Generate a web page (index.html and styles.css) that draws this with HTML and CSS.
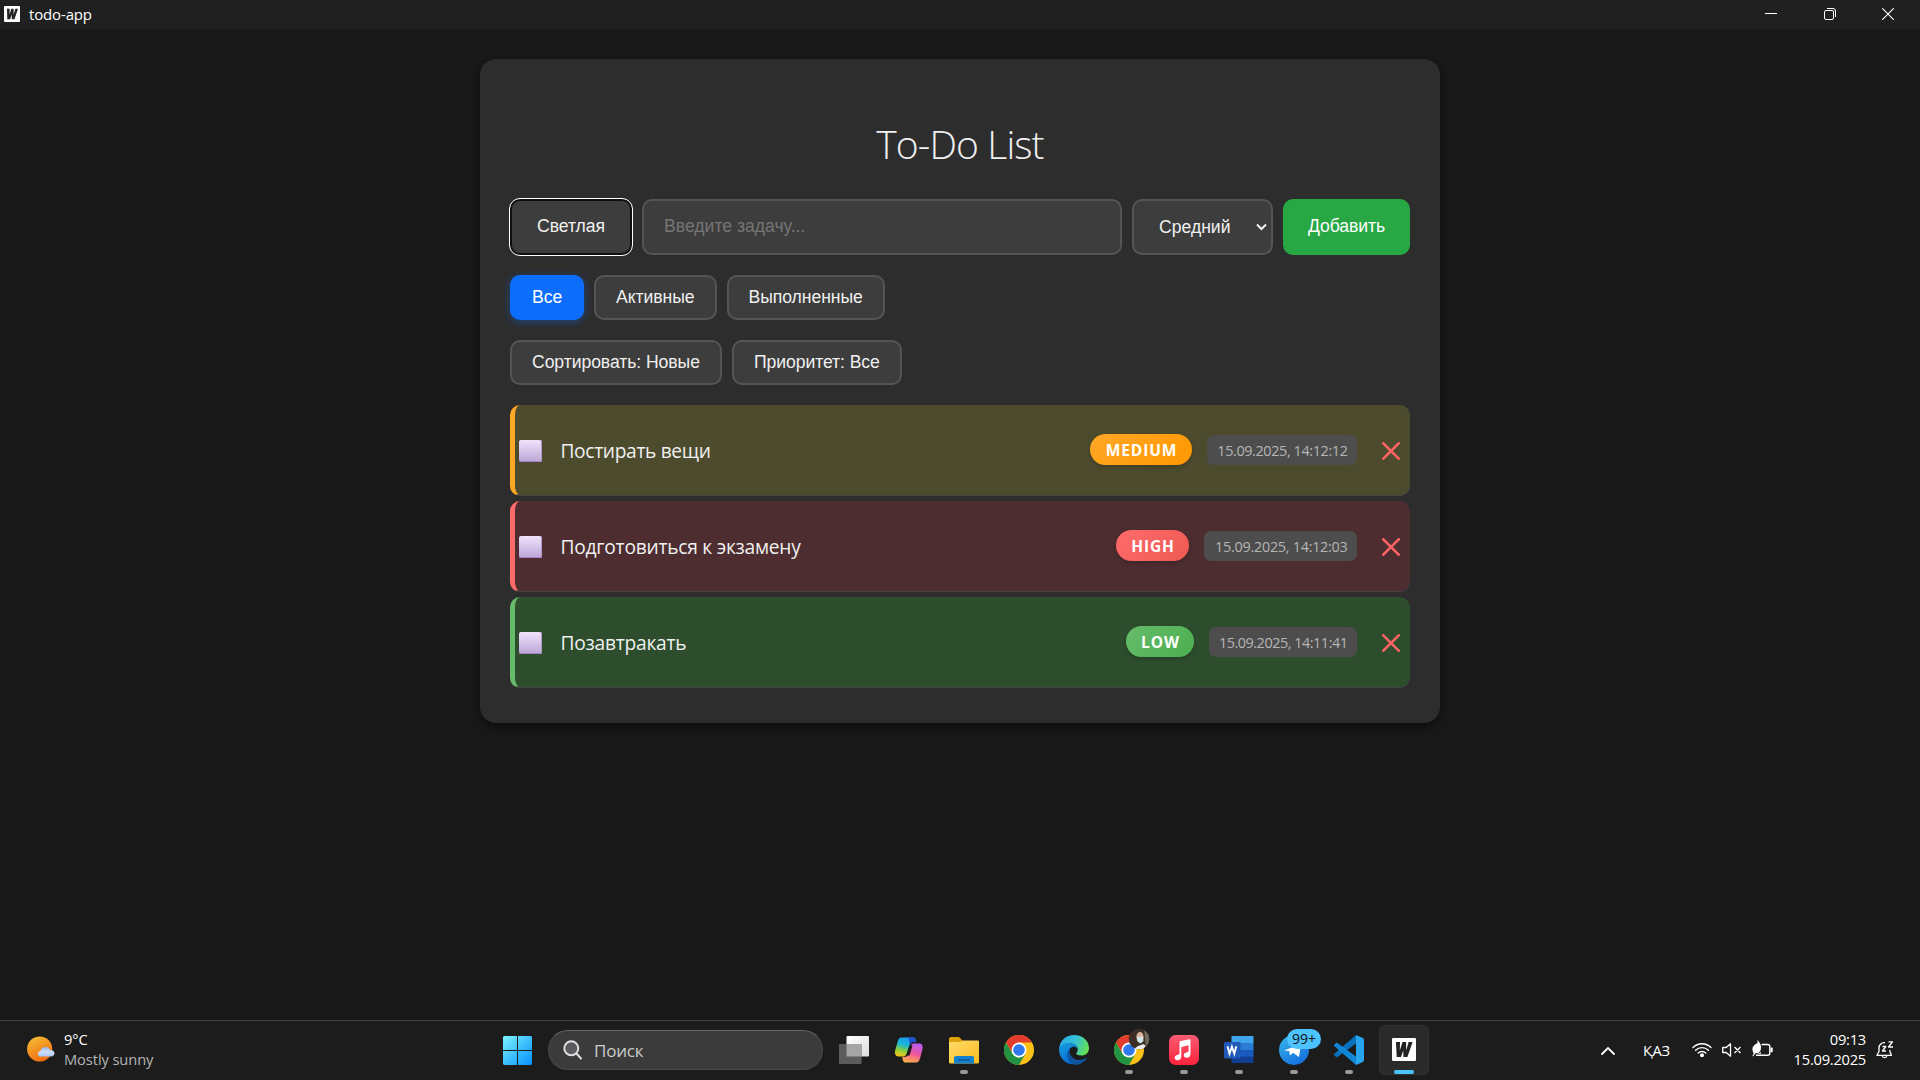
FILE: index.html
```html
<!DOCTYPE html>
<html lang="ru">
<head>
<meta charset="utf-8">
<title>todo-app</title>
<link rel="stylesheet" href="styles.css">
</head>
<body>
<div class="window">
  <header class="titlebar">
    <svg class="app-icon" width="16" height="16" viewBox="0 0 24 24"><rect width="24" height="24" rx="1.5" fill="#fff"/><path d="M4.500 4h4l-.2 9L11 4h3.400l.1 9L17 4h4l-5.300 16h-4l-.2-7.500L9.200 20H5z" fill="#222"/></svg>
    <span class="titlebar-text">todo-app</span>
    <div class="window-buttons">
      <svg width="12" height="12" viewBox="0 0 12 12"><path d="M0 5.500h12" stroke="#fff"/></svg>
      <svg width="12" height="12" viewBox="0 0 12 12" fill="none" stroke="#fff"><rect x=".5" y="2.500" width="9" height="9" rx="1.500"/><path d="M3 .5h6a2.500 2.500 0 0 1 2.500 2.500v6"/></svg>
      <svg width="12" height="12" viewBox="0 0 12 12"><path d="M.3.3l11.400 11.400M11.700.3L.3 11.700" stroke="#fff" stroke-width="1.100"/></svg>
    </div>
  </header>

  <main class="page">
    <section class="card">
      <h1 class="heading">To-Do List</h1>
      <div class="task-form">
        <button class="btn btn-theme">Светлая</button>
        <input class="task-input" type="text" placeholder="Введите задачу...">
        <div class="select"><span>Средний</span><svg width="11" height="8" viewBox="0 0 11 8"><path d="M1 1.500l4.500 4.500L10 1.500" fill="none" stroke="#f0f0f0" stroke-width="2"/></svg></div>
        <button class="btn btn-add">Добавить</button>
      </div>
      <div class="filters">
        <button class="btn active">Все</button>
        <button class="btn">Активные</button>
        <button class="btn">Выполненные</button>
      </div>
      <div class="filters">
        <button class="btn">Сортировать: Новые</button>
        <button class="btn">Приоритет: Все</button>
      </div>
      <ul class="tasks">
        <li class="task medium"><span class="check"></span><span class="task-text">Постирать вещи</span><span class="badge">MEDIUM</span><span class="date">15.09.2025, 14:12:12</span><svg class="remove" width="18" height="18" viewBox="0 0 18 18"><path d="M1.300 1.300l15.400 15.400M16.700 1.300L1.300 16.700"/></svg></li>
        <li class="task high"><span class="check"></span><span class="task-text">Подготовиться к экзамену</span><span class="badge">HIGH</span><span class="date">15.09.2025, 14:12:03</span><svg class="remove" width="18" height="18" viewBox="0 0 18 18"><path d="M1.300 1.300l15.400 15.400M16.700 1.300L1.300 16.700"/></svg></li>
        <li class="task low"><span class="check"></span><span class="task-text">Позавтракать</span><span class="badge">LOW</span><span class="date">15.09.2025, 14:11:41</span><svg class="remove" width="18" height="18" viewBox="0 0 18 18"><path d="M1.300 1.300l15.400 15.400M16.700 1.300L1.300 16.700"/></svg></li>
      </ul>
    </section>
  </main>

  <footer class="taskbar">
    <div class="weather">
      <svg width="28" height="26" viewBox="0 0 28 26"><defs><linearGradient id="sun" x1=".2" y1="0" x2=".7" y2="1"><stop offset="0" stop-color="#f3bc33"/><stop offset="1" stop-color="#f2660d"/></linearGradient><linearGradient id="cloud" x1="0" y1="0" x2="0" y2="1"><stop offset="0" stop-color="#8fb4ee"/><stop offset=".5" stop-color="#cfe0fa"/><stop offset="1" stop-color="#a8c6f5"/></linearGradient></defs><circle cx="12.700" cy="13" r="12.600" fill="url(#sun)"/><path d="M13 20.500a2.800 2.800 0 0 1 .3-5.500 5.500 5.500 0 0 1 10-1.300c2.500.2 4.200 1.800 4.200 3.600 0 2-1.500 3.200-3.500 3.200z" fill="url(#cloud)"/></svg>
      <div class="weather-text"><span>9°C</span><span class="dim">Mostly sunny</span></div>
    </div>
    <div class="dock">
      <svg class="start" width="29" height="29" viewBox="0 0 29 29"><defs><linearGradient id="win" gradientUnits="userSpaceOnUse" x1="0" y1="0" x2="29" y2="29"><stop offset="0" stop-color="#7df4ff"/><stop offset=".5" stop-color="#3fc0fb"/><stop offset="1" stop-color="#0592ff"/></linearGradient></defs><path d="M1 0h13v14H0V1zM15 0h13l1 1v13H15zM0 15h14v14H1l-1-1zM15 15h14v13l-1 1H15z" fill="url(#win)"/></svg>
      <div class="search"><svg width="20" height="20" viewBox="0 0 20 20" fill="none" stroke="#dcdfe3" stroke-width="2"><circle cx="8.300" cy="8.300" r="7" fill="#5b5b5d"/><path d="M13.500 13.500l4.500 5" stroke-linecap="round"/></svg><span>Поиск</span></div>
      <div class="apps">
        <span class="app"><svg width="30" height="30" viewBox="0 0 30 30"><defs><linearGradient id="tv" x1="0" y1="0" x2="1" y2="1"><stop offset="0" stop-color="#fff"/><stop offset="1" stop-color="#ddd"/></linearGradient></defs><rect x="7.500" y="1" width="22.500" height="20.500" rx="1" fill="url(#tv)"/><rect y="9" width="22.500" height="20" rx="1" fill="#5c5c5c"/><path d="M7.500 9h15v12.500h-15z" fill="#a5a5a5"/></svg></span>
        <span class="app"><svg width="30" height="30" viewBox="0 0 30 30"><defs><linearGradient id="cp1" x1=".6" y1="0" x2=".3" y2="1"><stop offset="0" stop-color="#1a9bef"/><stop offset=".4" stop-color="#18b7d4"/><stop offset=".7" stop-color="#8bd03e"/><stop offset="1" stop-color="#f5c618"/></linearGradient><linearGradient id="cp2" x1=".6" y1="0" x2=".3" y2="1"><stop offset="0" stop-color="#b95cf0"/><stop offset=".5" stop-color="#f0569b"/><stop offset="1" stop-color="#fcb04a"/></linearGradient></defs><path d="M7.500 2.500H19c2 0 2.700 1.500 3.200 4.200h-3c-2 0-2.900 1-3.500 3l-3 8.500c-.7 2.500-1.700 3.300-4 3.300H4.500C1.500 21.500.3 18.500 1.300 15l2.400-8.500c.7-2.500 1.700-4 3.800-4z" fill="url(#cp1)"/><path d="M14.500 2.500H19c2 0 2.700 1.500 3.200 4.700h-3c-2 0-2.600.8-3.200 2.800z" fill="#1f50d0"/><path d="M22 27.500H11.500c-2 0-2.700-1.500-3.300-5.500h2.500c2 0 3-1.500 3.600-3.500l2.400-7.500c.7-2 2-2.500 4.200-2.500h4.600c3 0 3.700 3 2.900 6L26 23.500c-.8 2.500-2 4-4 4z" fill="url(#cp2)"/><path d="M15.500 10.500h3l-3 10h-3z" fill="#1c1c1c"/></svg></span>
        <span class="app run"><svg width="30" height="30" viewBox="0 0 30 30"><defs><linearGradient id="fo" x1="0" y1="0" x2="1" y2="1"><stop offset="0" stop-color="#ffdb68"/><stop offset="1" stop-color="#fdbd22"/></linearGradient></defs><path d="M0 4a2 2 0 0 1 2-2h8l4 4h14v4H0z" fill="#dca10b"/><path d="M0 7h11l3-1.500h15a1 1 0 0 1 1 1V27a1.500 1.500 0 0 1-1.500 1.500h-27A1.500 1.500 0 0 1 0 27z" fill="url(#fo)"/><path d="M5 28.500V23a2 2 0 0 1 2-2h16a2 2 0 0 1 2 2v5.500z" fill="#1481cf"/><path d="M9 25h12" stroke="#0b5393" stroke-width="1.300"/></svg></span>
        <span class="app"><svg width="30" height="30" viewBox="0 0 30 30"><g id="chrome"><circle cx="15" cy="15" r="15" fill="#fbc116"/><path d="M2 7.500A15 15 0 0 1 28 7.500H15L8.500 18.700z" fill="#e33b2e"/><path d="M2 7.500A15 15 0 0 0 15 30l6.500-11.300L8.500 18.700z" fill="#229342"/><circle cx="15" cy="15" r="7.500" fill="#fff"/><circle cx="15" cy="15" r="5.800" fill="#3079ee"/></g></svg></span>
        <span class="app"><svg width="30" height="30" viewBox="0 0 30 30"><defs><linearGradient id="e1" x1="0" y1=".3" x2="1" y2=".6"><stop offset="0" stop-color="#2aa8e4"/><stop offset=".5" stop-color="#35c1d6"/><stop offset="1" stop-color="#66e34c"/></linearGradient><linearGradient id="e2" x1="0" y1="0" x2=".5" y2="1"><stop offset="0" stop-color="#199fe0"/><stop offset="1" stop-color="#0669d3"/></linearGradient></defs><path d="M0 14C1 5 7 0 15 0c9 0 15 6 15 13 0 5-3.500 7.500-7.500 7.500-3 0-5.300-1-5.300-2 0-.8 1.600-1.500 1.600-4C18.800 10 13 7.500 8 8.500 4 9.300 1.500 11 0 14z" fill="url(#e1)"/><path d="M0 14c2-5 6-6 9.500-6 5 0 9.300 3 9.300 6.500-.5-1.800-2-2.800-4-2.800-4 0-6 4-4 8.800 1.500 4 5.500 7 9.500 7.500C10 32.500 0 25 0 14z" fill="url(#e2)"/><path d="M11 14c-1.500 6 3 11 9 11 4 0 6.500-2 8-2C26.500 26 21 30 16 29.800 8 28 5.500 17 11 14z" fill="#10559f"/></svg></span>
        <span class="app run"><svg width="38" height="38" viewBox="0 0 38 38" class="profile"><use href="#chrome" x="0" y="8"/><clipPath id="av"><circle cx="25" cy="12" r="10.300"/></clipPath><g clip-path="url(#av)"><path d="M14 0h24v24H14z" fill="#3d2f25"/><path d="M30 0h8v22h-6z" fill="#6f6b5c"/><ellipse cx="26" cy="10" rx="3.600" ry="5" fill="#d9b29c"/><path d="M23 10l6-.500.5 4.500-3 2.500-3-2z" fill="#cfe5ec"/><path d="M19 23l5-4 6-2 3 5z" fill="#ececf0"/></g></svg></span>
        <span class="app run"><svg width="30" height="30" viewBox="0 0 30 30"><defs><linearGradient id="mu" x1="0" y1="0" x2="0" y2="1"><stop offset="0" stop-color="#fb5c74"/><stop offset="1" stop-color="#fa233b"/></linearGradient></defs><rect width="30" height="30" rx="6.500" fill="url(#mu)"/><path d="M21.500 5.300v13.500c0 2.500-1.500 4-3.800 4-1.800 0-2.900-1-2.900-2.500 0-1.700 1.200-2.600 3.200-3 1.200-.2 1.600-.5 1.600-1.500V10.300L12.300 12v9.300c0 2.500-1.400 4-3.800 4-1.700 0-2.800-1-2.800-2.500 0-1.700 1.200-2.500 3.200-3 1.200-.2 1.600-.5 1.600-1.500V7.500c0-.8.300-1.200 1.100-1.400l8.800-1.900c.8-.1 1.100.3 1.100 1.100z" fill="#fff"/></svg></span>
        <span class="app run"><svg width="30" height="30" viewBox="0 0 30 30"><path d="M8.500 1h20a1 1 0 0 1 1 1v6.500h-22V2a1 1 0 0 1 1-1z" fill="#41a5ee"/><path d="M7.500 8h22v7h-22z" fill="#2b7cd3"/><path d="M7.500 15h22v7h-22z" fill="#185abd"/><path d="M7.500 21.500h22V27a1 1 0 0 1-1 1h-20a1 1 0 0 1-1-1z" fill="#103f91"/><rect y="7" width="16.500" height="16.500" rx="1.300" fill="#2059b8"/><path d="M3.500 11.300l2 7.500 2.400-7 2.400 7 2-7.500" fill="none" stroke="#fff" stroke-width="1.900"/></svg></span>
        <span class="app run"><svg width="30" height="30" viewBox="0 0 30 30"><defs><linearGradient id="te" x1="0" y1="0" x2=".6" y2="1"><stop offset="0" stop-color="#37b9ea"/><stop offset="1" stop-color="#1672e0"/></linearGradient></defs><circle cx="15" cy="15" r="15" fill="url(#te)"/><path d="M5 15.500L22 9l-2 13-6-4.300-3 2.800-.8-4.500z" fill="#fff"/></svg><span class="count">99+</span></span>
        <span class="app run"><svg width="30" height="30" viewBox="0 0 30 30"><path d="M22 0l6.800 3a2 2 0 0 1 1.200 1.800v20.400a2 2 0 0 1-1.200 1.800L22 30z" fill="#27a5ee"/><path d="M22 0v8.500L3.500 22a1.200 1.200 0 0 1-1.500 0L.4 20.300a1 1 0 0 1 0-1.600z" fill="#0a72bd"/><path d="M22 30v-8.500L3.500 8A1.200 1.200 0 0 0 2 8L.4 9.700a1 1 0 0 0 0 1.600z" fill="#1286d6"/></svg></span>
        <span class="app current"><svg width="24" height="24" viewBox="0 0 24 24"><rect width="24" height="23" rx="1.200" fill="#fff"/><path d="M4 4h4l-.2 8.500L10.500 4h3.600l.1 8.500L16.600 4h4l-5.200 15h-4l-.1-6.500L9 19H4.700z" fill="#222"/></svg></span>
      </div>
    </div>
    <div class="tray">
      <svg class="chev" width="14" height="9" viewBox="0 0 14 9"><path d="M1 8l6-6 6 6" fill="none" stroke="#fff" stroke-width="1.800" stroke-linecap="round"/></svg>
      <span class="lang">ҚАЗ</span>
      <svg class="wifi" width="20" height="16" viewBox="0 0 20 16" fill="none" stroke="#fff" stroke-width="1.400" stroke-linecap="round"><path d="M1 5.500a12.700 12.700 0 0 1 18 0M3.600 8.300a9 9 0 0 1 12.800 0M6.200 11a5.400 5.400 0 0 1 7.600 0"/><circle cx="10" cy="13.300" r="1.300" fill="#fff"/></svg>
      <svg class="vol" width="20" height="14" viewBox="0 0 20 14" fill="none" stroke="#fff" stroke-width="1.300" stroke-linejoin="round"><path d="M.7 4.500h3.500L8.500.8v12.400L4.200 9.500H.7zM12.500 4l6 6M18.500 4l-6 6"/></svg>
      <svg class="bat" width="21" height="18" viewBox="0 0 21 18"><path d="M9.500 4.500h6.300a2 2 0 0 1 2 2v6.800a2 2 0 0 1-2 2H4" fill="none" stroke="#fff" stroke-width="1.400"/><path d="M18.500 7.500H20q.7 0 .7.700v3.300q0 .7-.7.700h-1.500z" fill="#fff"/><path d="M5.500 0c4 4 5 9.500 1 13l-3 .2L1 16.500l-.6-.8 1.300-2C-1 9 .5 5 5.500 3z" fill="#fff"/><path d="M8.500 8.500c1.500 3-1 5.500-4.500 5.500h5z" fill="#ddd"/></svg>
      <div class="clock"><span>09:13</span><span>15.09.2025</span></div>
      <svg class="bell" width="18" height="18" viewBox="0 0 18 18" fill="none" stroke="#fff" stroke-width="1.300" stroke-linejoin="round"><path d="M9 1.700C5.500 1.200 3 4 3 7v3.500L1 14.300h14.500L14 11V9M6.200 14.500c.5 2.800 4.300 2.800 4.800 0M6.500 5.500h3.300L6.500 10h3.500M12.500.8h4l-4 5.200H17"/></svg>
    </div>
  </footer>
</div>
</body>
</html>
```
FILE: styles.css
```css
* { box-sizing: border-box; }
body { margin: 0; background: #191919; color: #f0f0f0; font-family: "Open Sans", "Noto Sans", sans-serif; }
svg { display: block; flex: none; }
.window { display: flex; flex-direction: column; width: 1920px; height: 1080px; overflow: hidden; }

.titlebar { display: flex; align-items: center; height: 29px; flex: none; padding: 0 26px 1px 4px; background: #202020; color: #fff; }
.titlebar-text { margin-left: 9px; font-size: 15px; line-height: 28px; letter-spacing: -.15px; }
.window-buttons { display: flex; gap: 46.500px; margin-left: auto; }

.page { flex: 1; padding-top: 30px; }
.card { width: 960px; height: 664px; margin: 0 auto; padding: 30px; border-radius: 16px; background: #2d2d2d; box-shadow: 0 4px 12px rgba(0, 0, 0, .5); }
.heading { margin: 27px 0; text-align: center; font-size: 39px; font-weight: 300; line-height: 56px; letter-spacing: -.9px; }

.task-form { display: flex; gap: 10px; height: 56px; }
.btn { padding: 0 20px; border: 2px solid #555; border-radius: 10px; background: #3d3d3d; color: #f0f0f0; font: 17.600px "Liberation Sans", Arial, sans-serif; letter-spacing: -.07px; white-space: nowrap; }
.btn-theme { width: 122px; border-color: #101010; outline: 1px solid #fff; }
.task-input { width: 480px; padding: 0 20px 2px; border: 2px solid #555; border-radius: 10px; background: #3d3d3d; color: #f0f0f0; font: 17.600px "Liberation Sans", Arial, sans-serif; }
.task-input::placeholder { color: #757575; }
.select { display: flex; align-items: center; justify-content: space-between; width: 141px; padding: 0 4px 0 25px; border: 2px solid #555; border-radius: 10px; background: #3d3d3d; font: 17.600px "Liberation Sans", Arial, sans-serif; }
.btn-add { width: 127px; border-color: #28a745; background: #28a745; color: #fff; }
.btn-theme, .btn-add { padding-bottom: 2px; }
.filters { display: flex; gap: 10px; height: 45px; margin-top: 20px; }
.filters .btn { padding-bottom: 1px; }
.filters .active { border-color: #0d6efd; background: #0d6efd; color: #fff; box-shadow: 0 2px 8px rgba(13, 110, 253, .4); }

.tasks { display: flex; flex-direction: column; gap: 5px; margin: 20px 0 0; padding: 0; list-style: none; }
.task { display: flex; align-items: center; height: 91px; padding: 0 10px 0 4px; border-left: 5px solid; border-bottom: 1px solid #444; border-radius: 10px; }
.medium { border-left-color: #ffa726; background: #4d4b2d; }
.high { border-left-color: #ff6b6b; background: #4d2d2f; }
.low { border-left-color: #66bb6a; background: #2d4d2d; }
.check { width: 23px; height: 22px; margin-top: 2px; border-radius: 2px; background: linear-gradient(#f1e3fa, #bca5d6); box-shadow: inset 0 -1px #a583c8, inset -1px 0 #b39bcb; }
.task-text { flex: 1; margin: 2px 0 0 18.500px; font-size: 19.200px; line-height: 26px; letter-spacing: -.25px; white-space: nowrap; }
.medium .task-text { letter-spacing: -.35px; }
.badge { display: flex; justify-content: center; height: 31px; margin: -1px 15px 1px 0; padding-left: 1px; border-radius: 16px; color: #fff; font-size: 15.500px; font-weight: 700; line-height: 33px; letter-spacing: .9px; box-shadow: 0 2px 4px rgba(0, 0, 0, .2); }
.medium .badge { width: 102px; background: linear-gradient(135deg, #ffa726, #ff9800); }
.high .badge { width: 73px; background: linear-gradient(135deg, #ff6b6b, #ee5a52); }
.low .badge { width: 68px; background: linear-gradient(135deg, #66bb6a, #4caf50); }
.date { display: flex; justify-content: flex-end; height: 30px; padding-right: 9.500px; border-radius: 7px; background: #4d4d4d; color: #b5b5b5; font-size: 14.400px; font-weight: 500; line-height: 31px; white-space: nowrap; }
.medium .date { width: 150px; letter-spacing: -.38px; }
.high .date { width: 153px; letter-spacing: -.27px; }
.low .date { width: 148px; letter-spacing: -.46px; }
.remove { margin: 2px 0 0 25px; fill: none; stroke: #ff6464; stroke-width: 2.600; stroke-linecap: round; }

.taskbar { display: flex; height: 60px; flex: none; border-top: 1px solid #414141; background: #1c1c1c; color: #fff; }
.weather { display: flex; width: 503px; padding: 15px 0 0 27px; }
.weather-text { display: flex; flex-direction: column; margin: -7px 0 0 9px; font-size: 14.700px; line-height: 20px; letter-spacing: -.1px; }
.dim { color: #b4b4b4; }
.dock { display: flex; width: 926px; }
.start { margin-top: 15px; }
.search { display: flex; align-items: center; gap: 11px; width: 275px; height: 40px; margin: 9px 0 0 16px; padding-left: 14px; border: 1px solid #4a4a4a; border-top-color: #666; border-radius: 20px; background: #3b3b3b; color: #ccc; font-size: 17px; letter-spacing: -.2px; }
.apps { display: flex; gap: 5px; margin: 4px 0 0 6px; }
.app { position: relative; display: flex; align-items: center; justify-content: center; width: 50px; height: 50px; border-radius: 6px; }
.run::after, .current::after { content: ""; position: absolute; bottom: 1px; left: 21px; width: 8px; height: 4px; border-radius: 2px; background: #999; }
.current { border: 1px solid #333; background: #2a2a2a; }
.current::after { bottom: 0; left: 14px; width: 20px; background: #4cc2ff; }
.profile { margin: -8px -8px 0 0; }
.count { position: absolute; top: 4px; left: 18px; width: 34px; height: 20px; border-radius: 10px; background: #4cc2ff; color: #111; font-size: 14px; line-height: 20px; text-align: center; }
.tray { display: flex; align-items: center; flex: 1; padding: 0 26px 1px 172px; }
.lang { width: 27px; margin-left: 28px; font-size: 14.700px; letter-spacing: -.2px; }
.wifi { margin-left: 22px; }
.vol { margin-left: 10px; }
.bat { margin: -3px 0 0 10px; }
.clock { display: flex; flex-direction: column; align-items: flex-end; margin: -2px 0 0 auto; font-size: 14.700px; line-height: 20px; letter-spacing: -.25px; }
.bell { margin-left: 10px; }
```
